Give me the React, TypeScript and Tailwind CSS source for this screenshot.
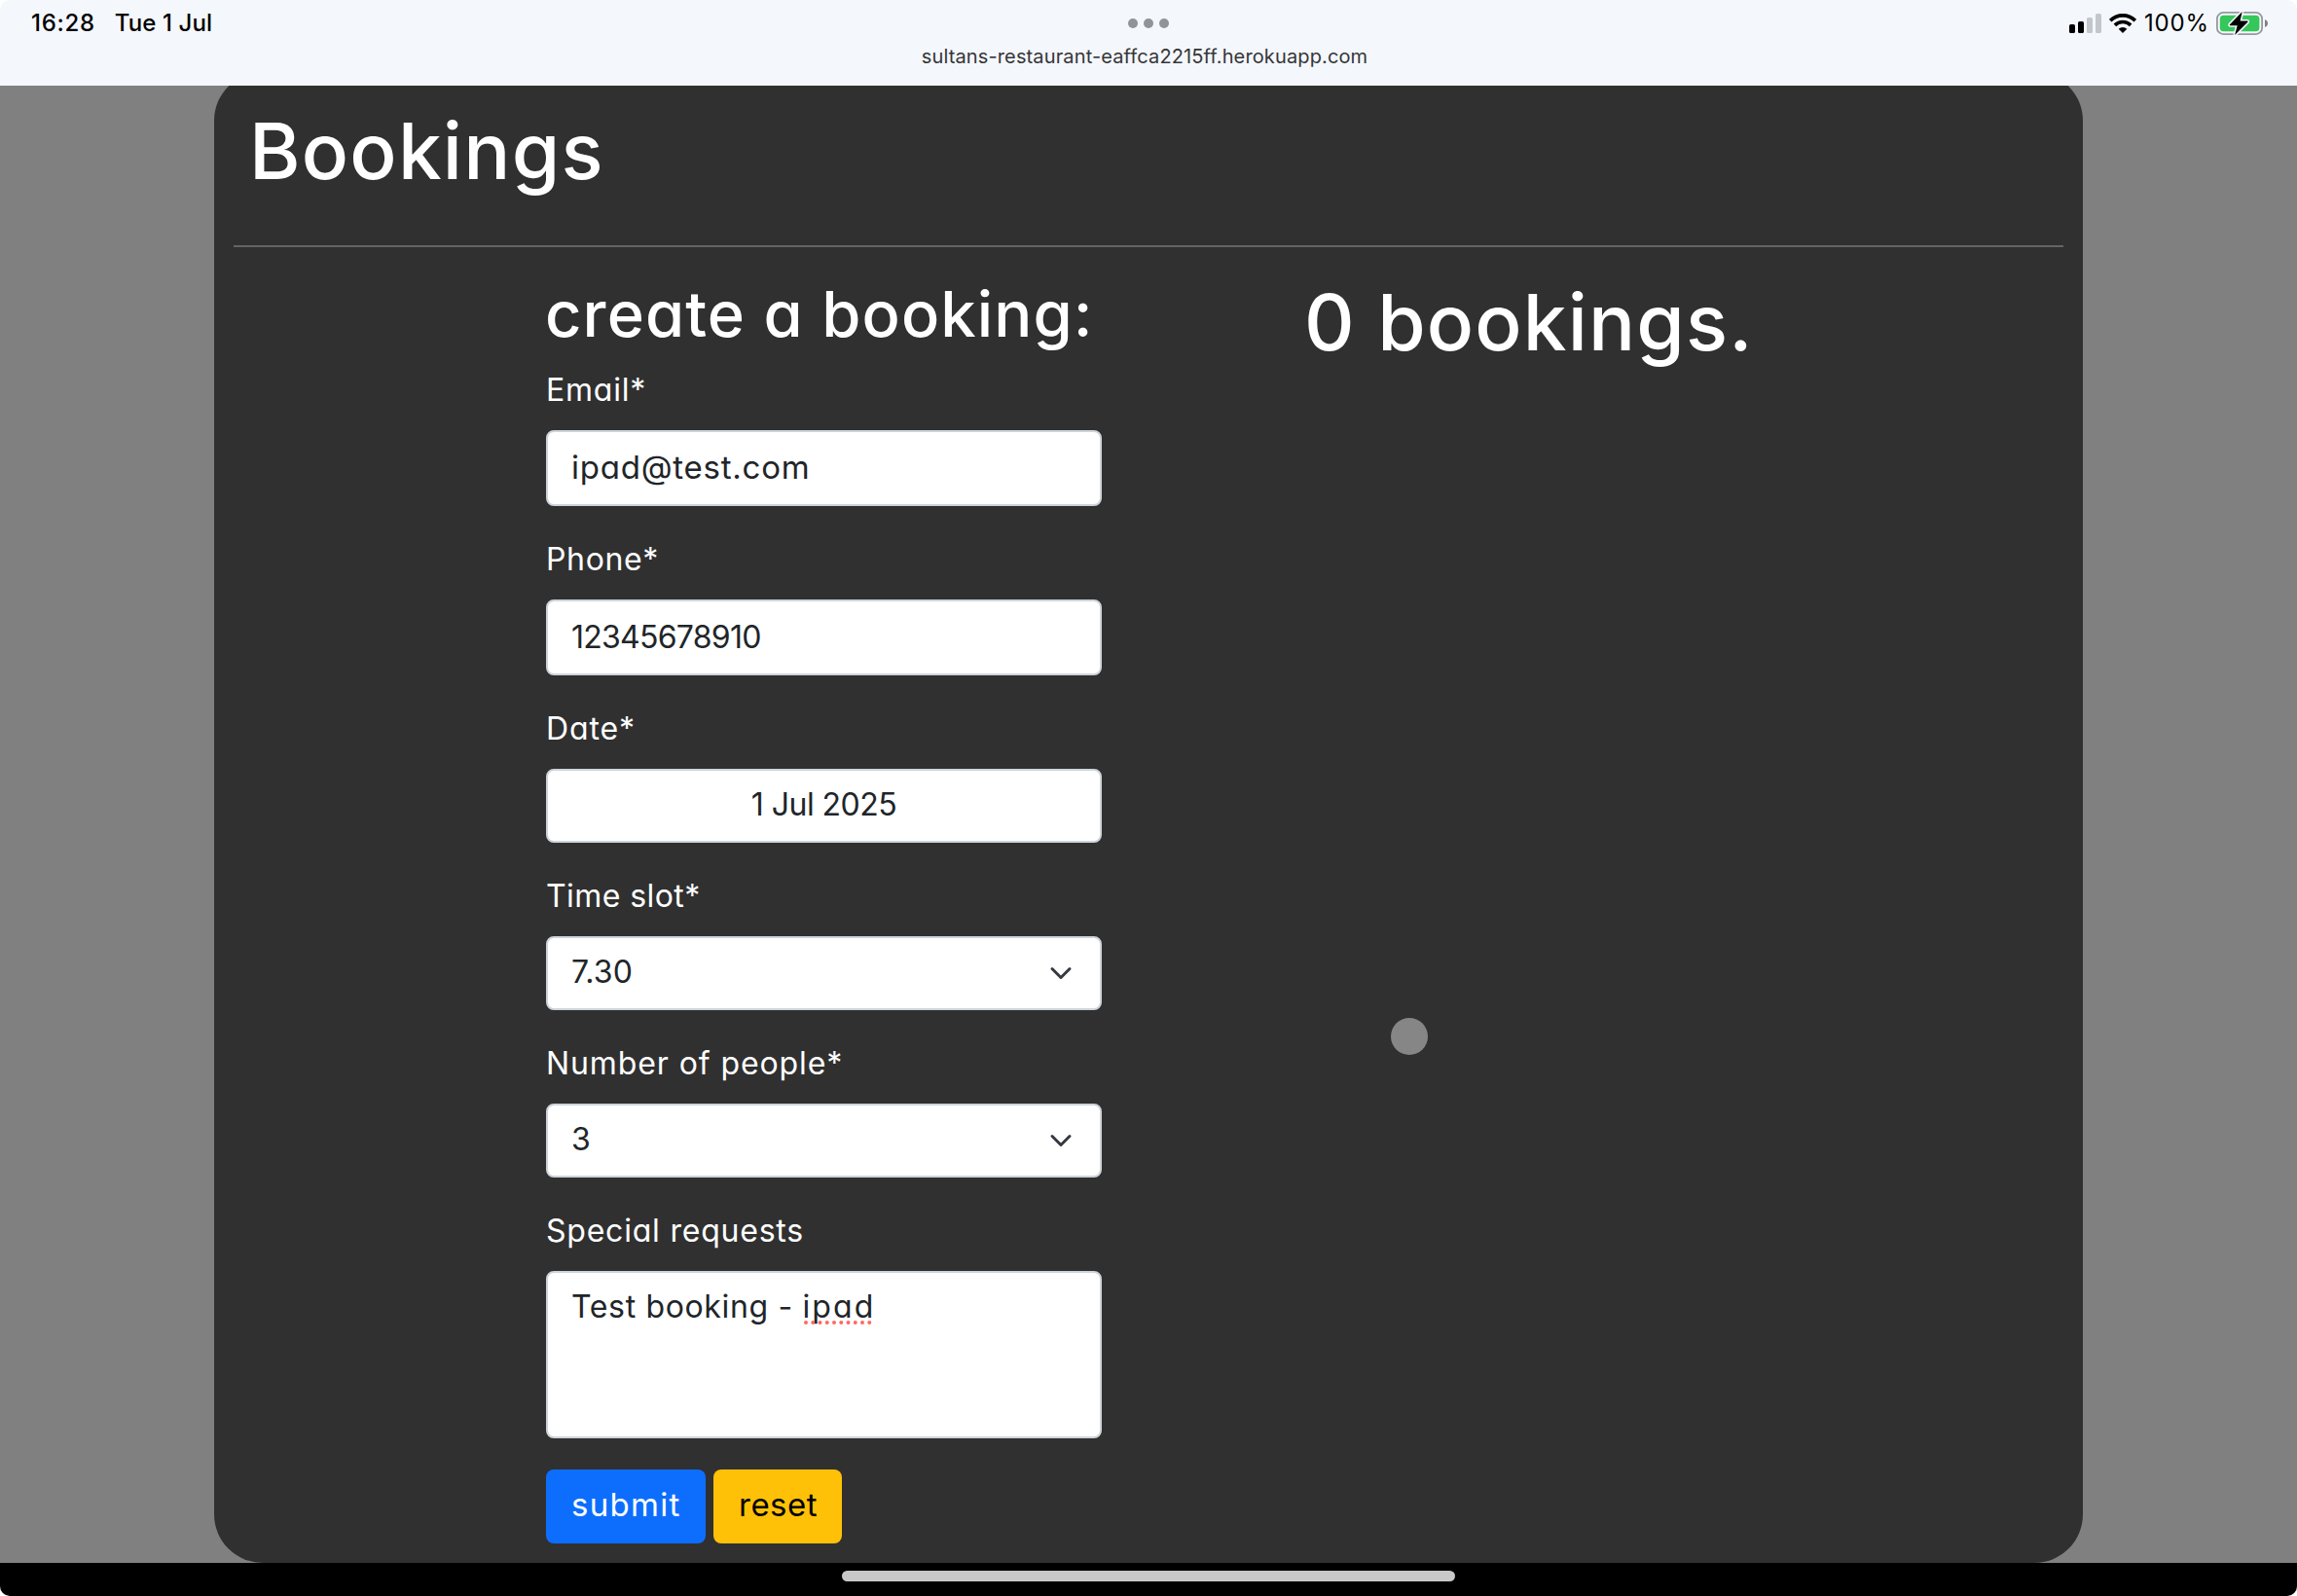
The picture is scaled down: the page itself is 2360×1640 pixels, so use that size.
import type { ReactNode } from "react";

function SignalIcon() {
  return (
    <svg className="mr-2 h-5 w-[33px]" viewBox="0 0 33 20">
      <rect x="0" y="11" width="6" height="9" rx="1.6" fill="#000" />
      <rect x="9" y="8" width="6" height="12" rx="1.6" fill="#000" />
      <rect x="18" y="4" width="6" height="16" rx="1.6" fill="#c3c6ca" />
      <rect x="27" y="0" width="6" height="20" rx="1.6" fill="#c3c6ca" />
    </svg>
  );
}

function WifiIcon() {
  return (
    <svg className="mr-2 h-5 w-7" viewBox="0 0 28 20">
      <path d="M1.2 7.2a18.1 18.1 0 0 1 25.6 0" fill="none" stroke="#000" strokeWidth="3.6" />
      <path d="M5.87 11.87a11.5 11.5 0 0 1 16.26 0" fill="none" stroke="#000" strokeWidth="3.6" />
      <path d="M14 20l-4.3-4.3a6.1 6.1 0 0 1 8.6 0z" fill="#000" />
    </svg>
  );
}

function BatteryIcon() {
  return (
    <svg className="h-6 w-[53px] overflow-visible" viewBox="0 0 53 24">
      <rect x="0.9" y="0.9" width="46.2" height="22.2" rx="6.4" fill="none" stroke="#97999d" strokeWidth="1.8" />
      <rect x="3.8" y="3.8" width="40.6" height="16.4" rx="3.8" fill="#34c759" />
      <path d="M50 8v8c1.8-.7 3-2.200 3-4s-1.200-3.300-3-4z" fill="#7d7f83" />
      <path
        d="M26.700 0L13.900 13.200q-.500 1 .700 1h7.100l-2.600 9.800L32.500 10.600q.500-1-.700-1h-7.200z"
        fill="#000"
        stroke="#f4f7fd"
        strokeWidth="3.200"
        strokeLinejoin="round"
        paintOrder="stroke"
      />
    </svg>
  );
}

function StatusBar() {
  return (
    <header className="h-[88px] rounded-t-[10px] bg-[#f4f7fc] text-2xl leading-8 text-black">
      <div className="grid h-12 grid-cols-3 items-center">
        <div className="flex gap-5 pl-8 font-medium">
          <span className="tracking-[0.71px]">16:28</span>
          <span className="tracking-[0.1px]">Tue 1 Jul</span>
        </div>
        <div className="flex justify-center gap-1.5">
          <span className="size-2.5 rounded-full bg-[#909499]" />
          <span className="size-2.5 rounded-full bg-[#909499]" />
          <span className="size-2.5 rounded-full bg-[#909499]" />
        </div>
        <div className="flex items-center justify-end pr-[30px]">
          <SignalIcon />
          <WifiIcon />
          <span className="w-[74px] tracking-[0.8px]">100%</span>
          <BatteryIcon />
        </div>
      </div>
      <div className="pr-2 text-center text-xl leading-[21px] tracking-[0.13px] text-[#353638]">
        sultans-restaurant-eaffca2215ff.herokuapp.com
      </div>
    </header>
  );
}

function Field({ label, children }: { label: ReactNode; children: ReactNode }) {
  return (
    <div className="flex flex-col">
      <div className="mt-px mb-[17px] h-12 leading-[48px] whitespace-nowrap">{label}</div>
      {children}
    </div>
  );
}

function Select({ children }: { children: ReactNode }) {
  return (
    <div className="flex h-[76px] items-center justify-between rounded-lg border-2 border-[#ced4da] bg-white px-6 text-[#212529]">
      <span className="pb-0.5 leading-[48px]">{children}</span>
      <svg className="mr-1 size-6" viewBox="0 0 16 16" fill="none" stroke="#343a40" strokeWidth="2" strokeLinecap="round" strokeLinejoin="round">
        <path d="m2 5 6 6 6-6" />
      </svg>
    </div>
  );
}

function BookingForm() {
  return (
    <div className="w-[571px]">
      <h2 className="-ml-px mt-0.5 mb-[15px] h-[76px] text-[65px] leading-[76px] font-medium tracking-[1.11px] whitespace-nowrap">
        create a booking:
      </h2>
      <div className="flex flex-col gap-[29px]">
        <Field label={<span className="tracking-[0.79px]">Email*</span>}>
          <div className="mb-px flex h-[78px] items-center rounded-lg border-2 border-[#ced4da] bg-white px-6 text-[33px] tracking-[0.77px] text-[#212529]">
            ipad@test.com
          </div>
        </Field>
        <Field label={<span className="tracking-[0.64px]">Phone*</span>}>
          <div className="mb-px flex h-[78px] items-center rounded-lg border-2 border-[#ced4da] bg-white px-6 tracking-[-0.74px] text-[#212529]">
            12345678910
          </div>
        </Field>
        <Field label={<span className="tracking-[0.9px]">Date*</span>}>
          <div className="mb-px flex h-[76px] items-center justify-center rounded-lg border-2 border-[#ced4da] bg-white px-6 pb-0.5 tracking-[-0.52px] text-[#212529]">
            1 Jul 2025
          </div>
        </Field>
        <Field label={<span className="tracking-[0.42px]">Time slot*</span>}>
          <div className="mb-px">
            <Select>
              <span className="tracking-[0.19px]">7.30</span>
            </Select>
          </div>
        </Field>
        <Field label={<span className="tracking-[0.9px]">Number of people*</span>}>
          <div className="mb-px">
            <Select>3</Select>
          </div>
        </Field>
        <Field label={<span className="tracking-[0.78px]">Special requests</span>}>
          <div className="h-[172px] rounded-lg border-2 border-[#ced4da] bg-white px-6 pt-[11px] leading-[48px] whitespace-pre text-[#212529]">
            <span className="tracking-[0.65px]">Test booking - </span>
            <span className="relative inline-block tracking-[2.1px]">
              ipad
              <svg className="absolute top-[38px] left-0.5 h-1 w-[72px]" viewBox="0 0 72 4">
                <line x1="2" y1="2" x2="70" y2="2" stroke="#ff6961" strokeWidth="4" strokeLinecap="round" strokeDasharray="0 7.25" />
              </svg>
            </span>
          </div>
        </Field>
      </div>
      <div className="mt-8 flex gap-2">
        <button className="h-[76px] w-[164px] rounded-lg bg-[#0d6efd] pb-0.5 pl-[26px] text-left text-[33px] tracking-[1.3px]">
          submit
        </button>
        <button className="h-[76px] w-[132px] rounded-lg bg-[#ffc107] pb-0.5 pl-[26px] text-left text-[33px] tracking-[0.5px] text-black">
          reset
        </button>
      </div>
    </div>
  );
}

export default function App() {
  return (
    <div className="h-[1640px] w-[2360px] overflow-hidden bg-white font-[Inter,sans-serif]">
      <StatusBar />
      <main className="relative h-[1518px] overflow-hidden bg-[#808080] text-[32px] text-white [font-feature-settings:'cv11']">
        <section className="mx-auto -mt-[14px] h-[1532px] w-[1920px] rounded-[50px] bg-[#303030] px-5 pt-[33px]">
          <h1 className="ml-4 text-[80px] leading-[96px] font-medium tracking-[1.24px]">Bookings</h1>
          <hr className="mt-[49px] mb-[29px] border-t-2 border-[#646464]" />
          <div className="flex gap-[208px] pl-[321px]">
            <BookingForm />
            <h1 className="text-[80px] leading-[96px] font-medium tracking-[1.14px] whitespace-nowrap">0 bookings.</h1>
          </div>
        </section>
        <div className="absolute top-[958px] left-[1429px] size-[38px] rounded-full bg-[#868686]" />
      </main>
      <footer className="flex h-[34px] justify-center rounded-b-[10px] bg-black pt-2">
        <div className="h-[11px] w-[630px] rounded-full bg-[#c8c8c8]" />
      </footer>
    </div>
  );
}
